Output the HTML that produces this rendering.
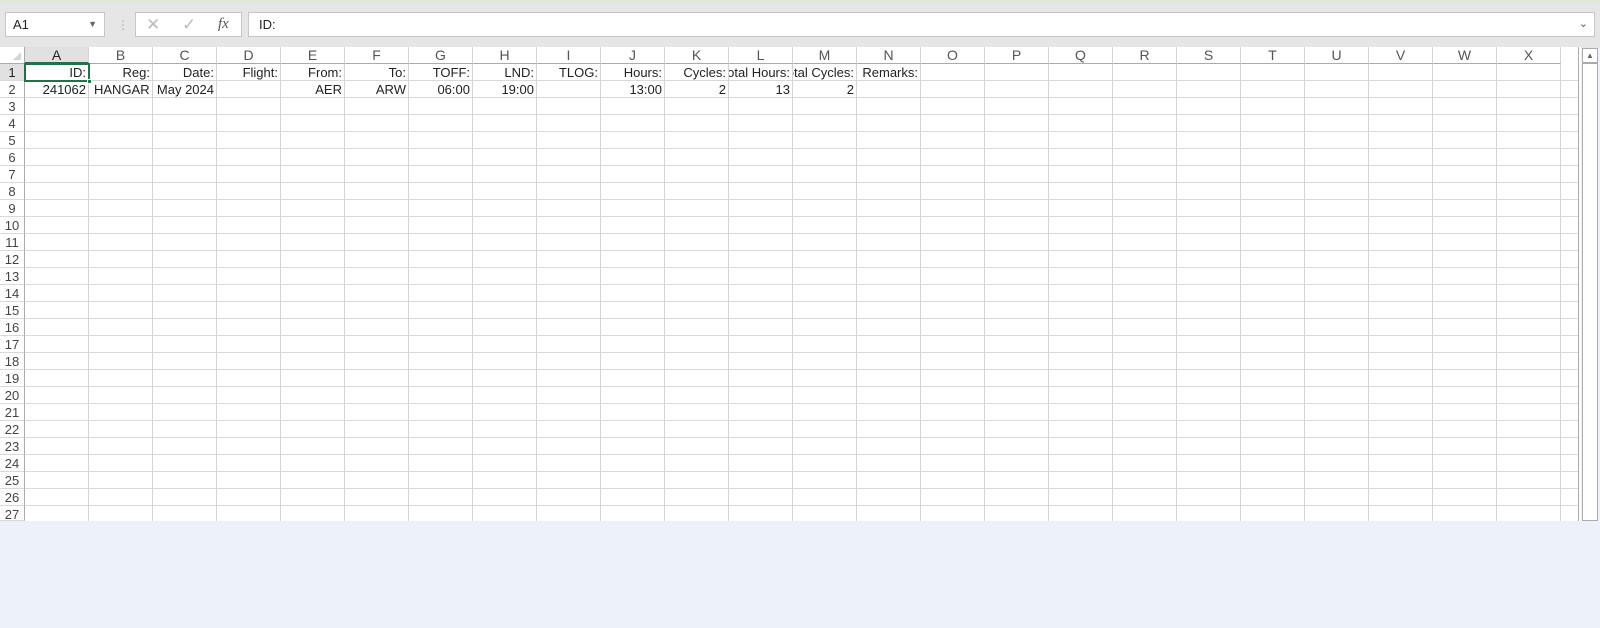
<!DOCTYPE html>
<html><head><meta charset="utf-8"><style>
*{box-sizing:border-box;margin:0;padding:0}
body{width:1600px;height:628px;overflow:hidden;background:#edf1f9;font-family:"Liberation Sans",Arial,sans-serif;position:relative}
.top{position:absolute;left:0;top:0;width:1600px;height:48px;background:#e6e6e6;border-top:3px solid #dfe7d6}
.box{position:absolute;background:#fff;border:1px solid #c6c6c6}
.sheet{position:absolute;left:0;top:47px;width:1581px;height:474px;background:#fff}
.grid{position:absolute;left:25px;top:17px;width:1553px;height:457px;
background-image:repeating-linear-gradient(to right,transparent 0 63px,#d4d4d4 63px 64px),repeating-linear-gradient(to bottom,transparent 0 16px,#d9d9d9 16px 17px);}
.ch{position:absolute;top:0;height:17px;width:64px;text-align:center;font-size:14px;line-height:17px;color:#555;border-right:1px solid #d4d4d4;border-bottom:1px solid #ababab}
.rh{position:absolute;left:0;width:25px;height:17px;text-align:center;font-size:13px;line-height:17px;color:#444;border-bottom:1px solid #d9d9d9;border-right:1px solid #ababab}
.c{position:absolute;height:17px;width:63px;display:flex;justify-content:flex-end;overflow:hidden;white-space:nowrap;font-size:13px;line-height:17px;color:#222;padding-right:2px}
.l{justify-content:flex-start;padding-left:5px}
</style></head><body>
<div class="top">
 <div class="box" style="left:5px;top:9px;width:100px;height:25px;font-size:13px;line-height:23px;padding-left:7px;color:#222">A1<span style="position:absolute;right:7px;top:0;font-size:9px;color:#666">▼</span></div>
 <div style="position:absolute;left:117px;top:15px;color:#aaa;font-size:12px">⋮</div>
 <div class="box" style="left:135px;top:9px;width:107px;height:25px;color:#bbb;font-size:17px;line-height:23px">
  <span style="position:absolute;left:10px">✕</span><span style="position:absolute;left:46px">✓</span><span style="position:absolute;left:82px;color:#555;font-family:'Liberation Serif',serif;font-style:italic;font-size:15px">fx</span></div>
 <div class="box" style="left:248px;top:9px;width:1347px;height:25px;font-size:13px;line-height:23px;padding-left:10px;color:#222">ID:<span style="position:absolute;right:6px;top:0;font-size:11px;color:#555">⌄</span></div>
</div>
<div class="sheet">
 <div style="position:absolute;left:0;top:0;width:25px;height:17px;border-right:1px solid #ababab;border-bottom:1px solid #ababab"><div style="position:absolute;right:3px;bottom:3px;width:0;height:0;border-left:8px solid transparent;border-bottom:8px solid #d4d4d4"></div></div>
 <div class="grid"></div>
</div>
<div style="position:absolute;left:1578px;top:47px;width:1px;height:474px;background:#ababab"></div>
<div style="position:absolute;left:1582px;top:48px;width:16px;height:473px;background:#fff;border:1px solid #ababab"><div style="height:15px;border-bottom:2px solid #aaa;text-align:center;font-size:8px;color:#666;line-height:14px">▲</div></div>
<div style="position:absolute;left:0;top:47px">
<div class="ch" style="left:25px;background:#e1e1e1;border-bottom:2px solid #217346;color:#222">A</div>
<div class="ch" style="left:89px">B</div><div class="ch" style="left:153px">C</div><div class="ch" style="left:217px">D</div><div class="ch" style="left:281px">E</div><div class="ch" style="left:345px">F</div><div class="ch" style="left:409px">G</div><div class="ch" style="left:473px">H</div><div class="ch" style="left:537px">I</div><div class="ch" style="left:601px">J</div><div class="ch" style="left:665px">K</div><div class="ch" style="left:729px">L</div><div class="ch" style="left:793px">M</div><div class="ch" style="left:857px">N</div><div class="ch" style="left:921px">O</div><div class="ch" style="left:985px">P</div><div class="ch" style="left:1049px">Q</div><div class="ch" style="left:1113px">R</div><div class="ch" style="left:1177px">S</div><div class="ch" style="left:1241px">T</div><div class="ch" style="left:1305px">U</div><div class="ch" style="left:1369px">V</div><div class="ch" style="left:1433px">W</div><div class="ch" style="left:1497px">X</div>
<div class="rh" style="top:17px;background:#e1e1e1;color:#222">1</div><div class="rh" style="top:34px">2</div><div class="rh" style="top:51px">3</div><div class="rh" style="top:68px">4</div><div class="rh" style="top:85px">5</div><div class="rh" style="top:102px">6</div><div class="rh" style="top:119px">7</div><div class="rh" style="top:136px">8</div><div class="rh" style="top:153px">9</div><div class="rh" style="top:170px">10</div><div class="rh" style="top:187px">11</div><div class="rh" style="top:204px">12</div><div class="rh" style="top:221px">13</div><div class="rh" style="top:238px">14</div><div class="rh" style="top:255px">15</div><div class="rh" style="top:272px">16</div><div class="rh" style="top:289px">17</div><div class="rh" style="top:306px">18</div><div class="rh" style="top:323px">19</div><div class="rh" style="top:340px">20</div><div class="rh" style="top:357px">21</div><div class="rh" style="top:374px">22</div><div class="rh" style="top:391px">23</div><div class="rh" style="top:408px">24</div><div class="rh" style="top:425px">25</div><div class="rh" style="top:442px">26</div><div class="rh" style="top:459px;height:15px;overflow:hidden">27</div>
<div class="c" style="left:25px;top:17px">ID:</div><div class="c" style="left:89px;top:17px">Reg:</div><div class="c" style="left:153px;top:17px">Date:</div><div class="c" style="left:217px;top:17px">Flight:</div><div class="c" style="left:281px;top:17px">From:</div><div class="c" style="left:345px;top:17px">To:</div><div class="c" style="left:409px;top:17px">TOFF:</div><div class="c" style="left:473px;top:17px">LND:</div><div class="c" style="left:537px;top:17px">TLOG:</div><div class="c" style="left:601px;top:17px">Hours:</div><div class="c" style="left:665px;top:17px">Cycles:</div><div class="c" style="left:729px;top:17px">Total Hours:</div><div class="c" style="left:793px;top:17px">Total Cycles:</div><div class="c" style="left:857px;top:17px">Remarks:</div>
<div class="c" style="left:25px;top:34px">241062</div><div class="c l" style="left:89px;top:34px">HANGAR</div><div class="c" style="left:153px;top:34px">May 2024</div><div class="c" style="left:281px;top:34px">AER</div><div class="c" style="left:345px;top:34px">ARW</div><div class="c" style="left:409px;top:34px">06:00</div><div class="c" style="left:473px;top:34px">19:00</div><div class="c" style="left:601px;top:34px">13:00</div><div class="c" style="left:665px;top:34px">2</div><div class="c" style="left:729px;top:34px">13</div><div class="c" style="left:793px;top:34px">2</div>
<div style="position:absolute;left:24px;top:16px;width:66px;height:19px;border:2px solid #217346"></div>
<div style="position:absolute;left:87px;top:32px;width:5px;height:5px;background:#217346;border:1px solid #fff"></div>
</div>
</body></html>
